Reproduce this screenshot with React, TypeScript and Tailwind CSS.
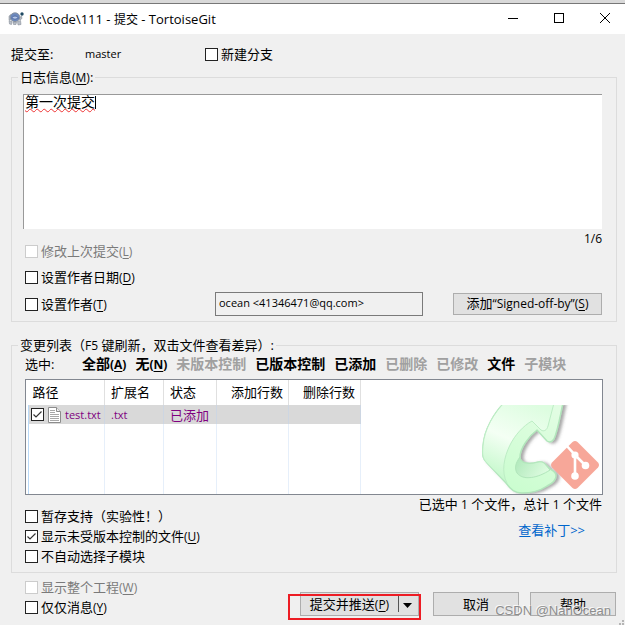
import type { ReactNode } from "react";

interface CheckProps {
  id: string;
  label: string;
  hotkey?: string;
  checked?: boolean;
  disabled?: boolean;
}

const boxClass =
  "peer col-start-1 row-start-1 size-[13px] appearance-none border border-[#222] bg-white disabled:border-[#ccc]";

function Box({ id, checked, disabled, label }: { id: string; checked?: boolean; disabled?: boolean; label?: string }) {
  return (
    <span className="grid shrink-0">
      <input id={id} type="checkbox" defaultChecked={checked} disabled={disabled} aria-label={label} className={boxClass} />
      <svg
        viewBox="0 0 13 13"
        className="pointer-events-none col-start-1 row-start-1 hidden size-[13px] peer-checked:block"
      >
        <path d="M2.5 6.5 L5 9 L10.5 3.5" fill="none" stroke="#333" strokeWidth="1.2" />
      </svg>
    </span>
  );
}

function Hotkey({ children }: { children: string }) {
  return (
    <span className="text-xs">
      (<u className="underline-offset-2">{children}</u>)
    </span>
  );
}

function Check({ id, label, hotkey, checked, disabled }: CheckProps) {
  return (
    <div className="flex h-5 items-center gap-[3px]">
      <Box id={id} checked={checked} disabled={disabled} />
      <label htmlFor={id} className={disabled ? "text-[#7a7a7a]" : ""}>
        {label}
        {hotkey && <Hotkey>{hotkey}</Hotkey>}
      </label>
    </div>
  );
}

function Group({ title, children }: { title: ReactNode; children: ReactNode }) {
  return (
    <fieldset className="min-w-0 border border-[#dcdcdc]">
      <legend className="ml-[6px] px-[2px] leading-[18px]">{title}</legend>
      {children}
    </fieldset>
  );
}

function TortoiseIcon() {
  return (
    <svg viewBox="0 0 16 16" className="size-4">
      <path d="M1 5 L3 3.5 L3.5 8 L1 9 Z M11 7 L13.5 5 L14 7.5 L12 9 Z" fill="#b4bac3" stroke="#7d8591" strokeWidth="0.5" />
      <ellipse cx="7" cy="6.2" rx="4.8" ry="4.4" fill="#6d89bd" stroke="#8a929d" strokeWidth="0.9" />
      <path d="M3.5 7 Q7 3 10.5 7 Q7 9.5 3.5 7 Z" fill="#b5c7e8" stroke="#3f5a94" strokeWidth="0.7" />
      <path
        d="M1 9.5 L4 10.5 L3.5 13.5 L1.5 13 Z M9.5 10.5 L12.5 9.5 L13 13.5 L10 14 Z M5 11 L8.5 11 L8 13.5 L5.5 13.5 Z"
        fill="#b9bfc8"
        stroke="#79818d"
        strokeWidth="0.5"
      />
      <circle cx="14" cy="3" r="1.7" fill="#1f4a63" />
    </svg>
  );
}

function FileIcon() {
  return (
    <svg viewBox="0 0 13 16" className="h-4 w-[13px] shrink-0">
      <path d="M0.5 0.5 H8.5 L12.5 4.5 V15.5 H0.5 Z" fill="#fff" stroke="#8c8c8c" />
      <path d="M8.5 0.5 V4.5 H12.5" fill="#eee" stroke="#8c8c8c" />
      <path d="M2 3.5 H7 M2 5.5 H7 M2 7.5 H11 M2 9.5 H11 M2 11.5 H11 M2 13.5 H11" stroke="#a8a8a8" />
    </svg>
  );
}

function ListArt() {
  return (
    <svg viewBox="0 0 119 90" className="h-[90px] w-[119px]">
      <defs>
        <linearGradient id="front" x1="0.8" y1="0" x2="0.3" y2="1">
          <stop offset="0" stopColor="#e2fde3" />
          <stop offset="1" stopColor="#c9fdce" />
        </linearGradient>
        <linearGradient id="side" x1="0.7" y1="0" x2="0.3" y2="1">
          <stop offset="0" stopColor="#ddfde0" />
          <stop offset="0.5" stopColor="#f4fff4" />
          <stop offset="1" stopColor="#c2f8c9" />
        </linearGradient>
        <linearGradient id="hook" x1="0" y1="0" x2="1" y2="0.4">
          <stop offset="0" stopColor="#aee8b9" />
          <stop offset="1" stopColor="#dcfbdf" />
        </linearGradient>
        <filter id="shade" x="-20%" y="-20%" width="140%" height="140%">
          <feDropShadow dx="3" dy="1" stdDeviation="1.8" floodColor="#555" floodOpacity="0.5" />
        </filter>
        <clipPath id="frame">
          <rect x="0" y="1" width="119" height="89" />
        </clipPath>
      </defs>
      <g clipPath="url(#frame)">
        <path
          filter="url(#shade)"
          d="M23 -1 C14 8 3 25 2 42 C1 52 2 55 6 59 L25 79 C30 86 34 89 41 89 C51 89 60 86 66 82 C72 79 75 76 75 72 C75 68 72 67 69 65 L63 59 C60 57 57 58 53 59 C46 60 39 59 39 53 C39 44 48 32 56 26 L66 37 C69 39 71 38 73 35 C77 26 79 12 82 -1 Z"
          fill="url(#front)"
          stroke="#b1e6bb"
          strokeWidth="1.4"
          strokeLinejoin="round"
        />
        <path
          d="M23 -1 C14 8 3 25 2 42 C1 52 2 55 6 59 L26 79 C20 68 23 53 29 41 C34 31 42 22 51 17 L60 26 C63 28 66 26 67 22 L73 -1 Z"
          fill="url(#side)"
          stroke="#bdedc5"
        />
        <path
          d="M39 53 C35 58 33 64 36 69 C42 77 57 74 69 66 L63 59 C60 57 57 58 53 59 C46 60 39 59 39 53 Z"
          fill="url(#hook)"
          stroke="#b1e6bb"
        />
      </g>
      <path
        d="M91.5 38 Q94 36 96.5 38 L117 58.5 Q119 61 117 63.5 L96.5 84 Q94 86 91.5 84 L71 63.5 Q69 61 71 58.5 Z"
        fill="#f7a799"
      />
      <path d="M85 41 L94 51 V74 M94 51 L104 61" fill="none" stroke="#fff" strokeWidth="2.6" />
      <circle cx="94" cy="51" r="3.6" fill="#fff" />
      <circle cx="94" cy="72" r="3.8" fill="#fff" />
      <circle cx="104.5" cy="61.5" r="3.8" fill="#fff" />
    </svg>
  );
}

const filters = [
  { label: "全部", hotkey: "A" },
  { label: "无", hotkey: "N" },
  { label: "未版本控制", disabled: true },
  { label: "已版本控制" },
  { label: "已添加" },
  { label: "已删除", disabled: true },
  { label: "已修改", disabled: true },
  { label: "文件" },
  { label: "子模块", disabled: true },
];

const headLine = "border-r border-[#e0e0e0] pb-[2px] font-normal";
const rowLine = "border-r border-[#cdd6e2]";
const cellLine = "border-r border-[#e6effa]";

export default function App() {
  return (
    <div className="relative bg-[#f0f0f0] font-['Open_Sans','Noto_Sans_CJK_SC',sans-serif] text-[13px] leading-[18px] text-black">
      <header className="flex h-[34px] items-center border-t-[3px] border-[#d9d9d9] bg-white pr-[15px] pl-2 shadow-[inset_0_1px_0_#777]">
        <TortoiseIcon />
        <h1 className="ml-[5px] flex-1">
          D:\code\111 - <span className="text-xs">提交</span> - TortoiseGit
        </h1>
        <div className="flex items-center gap-9 pb-[2px]">
          <button type="button" aria-label="最小化">
            <svg viewBox="0 0 10 10" className="size-[10px]">
              <path d="M0 5.5 H10" stroke="#000" />
            </svg>
          </button>
          <button type="button" aria-label="最大化">
            <svg viewBox="0 0 10 10" className="size-[10px]">
              <rect x="0.5" y="0.5" width="9" height="9" fill="none" stroke="#000" />
            </svg>
          </button>
          <button type="button" aria-label="关闭">
            <svg viewBox="0 0 10 10" className="size-[10px]">
              <path d="M0 0 L10 10 M10 0 L0 10" stroke="#000" />
            </svg>
          </button>
        </div>
      </header>

      <main className="pt-[9px] pr-2 pl-[11px]">
        <div className="flex h-[22px] items-center">
          <span className="w-[74px]">提交至:</span>
          <span className="w-[120px] text-[11px]">master</span>
          <Check id="branch" label="新建分支" />
        </div>

        <div className="mt-[3px]">
          <Group title={<label htmlFor="message">日志信息<Hotkey>M</Hotkey>:</label>}>
            <div className="mt-2 pr-[14px] pb-[6px] pl-[11px]">
              <div className="relative">
                <textarea
                  id="message"
                  spellCheck={false}
                  defaultValue="第一次提交"
                  className="block h-[135px] w-full resize-none border-t border-l border-[#999] bg-white pl-[1px] font-['Liberation_Mono','Noto_Sans_CJK_SC',monospace] text-sm leading-4 underline decoration-[#e33] decoration-wavy decoration-1 outline-none"
                />
                {/* caret */}
                <span className="pointer-events-none absolute top-[2px] left-[72px] h-[13px] w-px bg-black" />
              </div>
              <div className="h-3 text-right text-xs leading-5">1/6</div>
              <div className="ml-[2px] flex flex-col gap-[6px]">
                <Check id="amend" label="修改上次提交" hotkey="L" disabled />
                <Check id="date" label="设置作者日期" hotkey="D" />
                <div className="flex h-[22px] items-center">
                  <div className="w-[190px]">
                    <Check id="author" label="设置作者" hotkey="T" />
                  </div>
                  <input
                    aria-label="作者"
                    readOnly
                    defaultValue="ocean <41346471@qq.com>"
                    className="h-6 w-[208px] border border-[#7a7a7a] bg-[#f0f0f0] px-[3px] pb-[3px] text-[11px] outline-none"
                  />
                  <button type="button" className="ml-auto h-[22px] w-[149px] border border-[#adadad] bg-[#e1e1e1] text-xs">
                    <span className="text-[13px]">添加</span>“Signed-off-by”<Hotkey>S</Hotkey>
                  </button>
                </div>
              </div>
            </div>
          </Group>
        </div>

        <div className="mt-[14px]">
          <Group
            title={
              <>
                变更列表（<span className="text-xs">F5</span> 键刷新，双击文件查看差异）:
              </>
            }
          >
            <div className="pr-[13px] pb-[6px] pl-[13px]">
              <div className="flex h-5 items-center">
                <span className="w-[57px]">选中:</span>
                <div className="flex gap-[9px] text-sm font-bold">
                  {filters.map((f) => (
                    <button
                      key={f.label}
                      type="button"
                      disabled={f.disabled}
                      className="whitespace-nowrap disabled:text-[#a0a0a0]"
                    >
                      {f.label}
                      {f.hotkey && <Hotkey>{f.hotkey}</Hotkey>}
                    </button>
                  ))}
                </div>
              </div>

              <div className="relative mt-[5px] h-[116px] border border-[#828790] bg-white">
                <div className="absolute right-[2px] bottom-0">
                  <ListArt />
                </div>
                <table className="relative ml-[2px] h-full w-[332px] table-fixed border-collapse text-left">
                  <colgroup>
                    <col className="w-[76px]" />
                    <col className="w-[59px]" />
                    <col className="w-[53px]" />
                    <col className="w-[72px]" />
                    <col className="w-[72px]" />
                  </colgroup>
                  <thead>
                    <tr className="h-[25px]">
                      <th className={`${headLine} pl-[4px]`}>路径</th>
                      <th className={`${headLine} pl-[6px]`}>扩展名</th>
                      <th className={`${headLine} pl-[6px]`}>状态</th>
                      <th className={`${headLine} pr-[5px] text-right`}>添加行数</th>
                      <th className={`${headLine} pr-[5px] text-right`}>删除行数</th>
                    </tr>
                  </thead>
                  <tbody>
                    <tr className="h-[19px] bg-[#d9d9d9] text-[#800080]">
                      <td className={`${rowLine} border-l border-l-[#b9d9f7] pl-[2px] text-[11px]`}>
                        <div className="flex items-center gap-1">
                          <Box id="file" checked label="test.txt" />
                          <FileIcon />
                          <span>test.txt</span>
                        </div>
                      </td>
                      <td className={`${rowLine} pl-[6px] text-[11px]`}>.txt</td>
                      <td className={`${rowLine} pl-[6px]`}>已添加</td>
                      <td className={rowLine} />
                      <td className={rowLine} />
                    </tr>
                    <tr>
                      <td className={`${cellLine} border-l border-l-[#b9d9f7]`} />
                      <td className={cellLine} />
                      <td className={cellLine} />
                      <td className={cellLine} />
                      <td className={cellLine} />
                    </tr>
                  </tbody>
                </table>
              </div>

              <div className="flex justify-between">
                <div className="mt-[11px]">
                  <Check id="stage" label="暂存支持（实验性！）" />
                  <Check id="unversioned" label="显示未受版本控制的文件" hotkey="U" checked />
                  <Check id="submodules" label="不自动选择子模块" />
                </div>
                <div className="flex flex-col items-end gap-2 pr-px">
                  <span>
                    已选中 <span className="text-xs">1</span> 个文件，总计 <span className="text-xs">1</span> 个文件
                  </span>
                  <a href="#patch" className="mr-[17px] text-[#0066cc]">
                    查看补丁&gt;&gt;
                  </a>
                </div>
              </div>
            </div>
          </Group>
        </div>

        <footer className="flex items-start justify-between pt-[4px] pr-px pb-[9px] pl-[14px]">
          <div>
            <Check id="project" label="显示整个工程" hotkey="W" disabled />
            <Check id="msgonly" label="仅仅消息" hotkey="Y" />
          </div>
          <div className="mt-[15px] flex gap-[11px]">
            <div className="relative mr-[3px] flex h-6 w-[119px] border border-[#adadad] bg-[#e1e1e1]">
              <button type="button" className="flex-1">
                提交并推送<Hotkey>P</Hotkey>
              </button>
              <button type="button" aria-label="更多提交选项" className="w-5">
                <svg viewBox="0 0 20 22" className="h-[22px] w-5">
                  <path d="M0.5 2 V19" stroke="#555" />
                  <path d="M5 10 H14 L9.5 15 Z" fill="#000" />
                </svg>
              </button>
              {/* highlight frame */}
              <span className="pointer-events-none absolute top-px -right-[3px] -bottom-[5px] -left-[13px] border-2 border-[#ed1c24]" />
            </div>
            <button type="button" className="h-6 w-[86px] border border-[#adadad] bg-[#e1e1e1]">
              取消
            </button>
            <button type="button" className="h-6 w-[86px] border border-[#adadad] bg-[#e1e1e1]">
              帮助
            </button>
          </div>
        </footer>
      </main>
      <span className="pointer-events-none absolute right-[14px] bottom-[6px] font-['Liberation_Sans',sans-serif] text-[13px] text-[#8e8e8e] [text-shadow:-1px_-1px_0_#f8f8f8]">
        CSDN @NanOcean
      </span>
      <svg viewBox="0 0 6 6" className="pointer-events-none absolute right-0 bottom-0 size-[6px]">
        <path d="M3 0 H5 V2 H3 Z M3 3 H5 V5 H3 Z M0 3 H2 V5 H0 Z" fill="#b5b5b5" />
      </svg>
    </div>
  );
}
